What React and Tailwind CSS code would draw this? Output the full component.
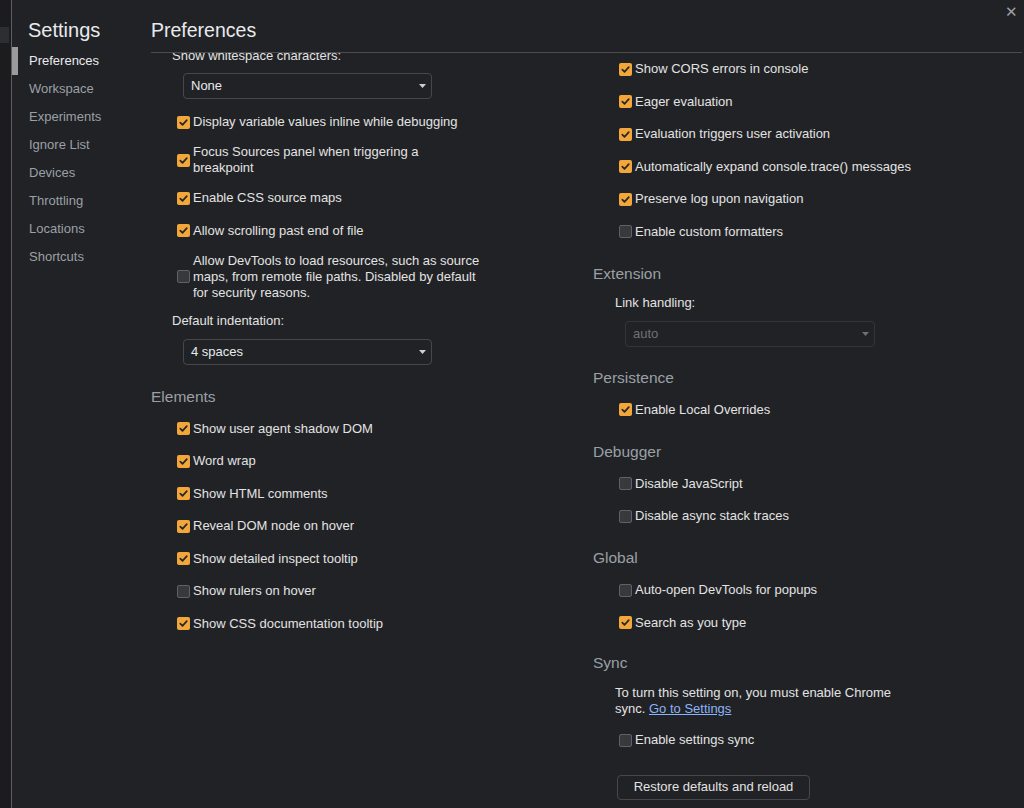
import React from "react";

const Box = ({ checked }) =>
  checked ? (
    <span className="w-[13px] h-[13px] rounded-[2px] bg-[#f3a73b] flex items-center justify-center shrink-0">
      <svg width="11" height="11" viewBox="0 0 11 11">
        <path d="M2.3 5.7 L4.5 7.9 L8.8 3.1" fill="none" stroke="#26272a" strokeWidth="1.7" strokeLinecap="round" strokeLinejoin="round" />
      </svg>
    </span>
  ) : (
    <span className="w-[13px] h-[13px] rounded-[2px] bg-[#38393c] border border-[#5f6166] shrink-0" />
  );

const Row = ({ checked, children, pl = "pl-[26px]" }) => (
  <div className={`flex items-center min-h-[32.5px] py-[5.75px] ${pl}`}>
    <Box checked={checked} />
    <span className="ml-[3px] max-w-[300px] leading-[16px]">{children}</span>
  </div>
);

const Arrow = ({ color }) => (
  <svg width="7" height="4" viewBox="0 0 7 4">
    <path d="M0 0 H7 L3.5 4 Z" fill={color} />
  </svg>
);

const Select = ({ value, disabled, w = "w-[249px]" }) => (
  <div
    className={`ml-[32px] ${w} h-[26px] border rounded-[4px] flex items-center justify-between pl-[7px] pr-[5px] ${
      disabled ? "border-[#34353a] text-[#6f7075]" : "border-[#45474c] text-[#e8eaed]"
    }`}
  >
    <span className="leading-[16px]">{value}</span>
    <Arrow color={disabled ? "#6f7075" : "#d0d0d0"} />
  </div>
);

const Heading = ({ children, mt }) => (
  <div className={`${mt} text-[15.5px] leading-[20px] text-[#9aa0a6]`}>{children}</div>
);

export default function App() {
  const nav = ["Preferences", "Workspace", "Experiments", "Ignore List", "Devices", "Throttling", "Locations", "Shortcuts"];
  return (
    <div className="relative w-[1024px] h-[808px] bg-[#212225] flex overflow-hidden text-[13px] text-[#e3e3e3] font-['Liberation_Sans',Arial,sans-serif]">
      <div className="w-[12px] shrink-0 bg-[#1c1c1e] border-r border-[#5f5f62] pt-[27px]">
        <div className="h-[16px] w-[9px] bg-[#2d2e31]" />
      </div>

      <div className="w-[139px] shrink-0 flex flex-col">
        <div className="pt-[18px] pl-[16px] text-[20px] leading-[24px] text-[#e8eaed]">Settings</div>
        <div className="mt-[5px] flex flex-col">
          {nav.map((n, i) => (
            <div key={n} className="flex items-center h-[28px]">
              <div className={`w-[6px] h-full ${i === 0 ? "bg-[#9b9b9d]" : ""}`} />
              <span className={`ml-[11px] ${i === 0 ? "text-[#e8eaed]" : "text-[#9aa0a6]"}`}>{n}</span>
            </div>
          ))}
        </div>
      </div>

      <div className="flex-1 flex flex-col mr-[2px]">
        <div className="h-[53px] shrink-0 border-b border-[#4a4c50] pt-[18px] text-[19.5px] leading-[24px] text-[#e8eaed]">
          Preferences
        </div>
        <div className="flex-1 overflow-hidden flex">
          <div className="w-[442px] shrink-0 -mt-[5px]">
            <div className="pl-[21px] leading-[16px]">Show whitespace characters:</div>
            <div className="mt-[9px]">
              <Select value="None" />
            </div>
            <div className="mt-[7px]">
              <Row checked>Display variable values inline while debugging</Row>
              <Row checked>
                Focus Sources panel when triggering a<br />
                breakpoint
              </Row>
              <Row checked>Enable CSS source maps</Row>
              <Row checked>Allow scrolling past end of file</Row>
              <Row>
                Allow DevTools to load resources, such as source
                <br />
                maps, from remote file paths. Disabled by default
                <br />
                for security reasons.
              </Row>
            </div>
            <div className="pl-[21px] mt-[6px] leading-[16px]">Default indentation:</div>
            <div className="mt-[10px]">
              <Select value="4 spaces" />
            </div>
            <Heading mt="mt-[22px]">Elements</Heading>
            <div className="mt-[5.75px]">
              <Row checked>Show user agent shadow DOM</Row>
              <Row checked>Word wrap</Row>
              <Row checked>Show HTML comments</Row>
              <Row checked>Reveal DOM node on hover</Row>
              <Row checked>Show detailed inspect tooltip</Row>
              <Row>Show rulers on hover</Row>
              <Row checked>Show CSS documentation tooltip</Row>
            </div>
          </div>

          <div className="flex-1">
            <Row checked>Show CORS errors in console</Row>
            <Row checked>Eager evaluation</Row>
            <Row checked>Evaluation triggers user activation</Row>
            <Row checked>Automatically expand console.trace() messages</Row>
            <Row checked>Preserve log upon navigation</Row>
            <Row>Enable custom formatters</Row>

            <Heading mt="mt-[15.75px]">Extension</Heading>
            <div className="pl-[22px] mt-[11px] leading-[16px]">Link handling:</div>
            <div className="mt-[10px]">
              <Select value="auto" disabled w="w-[250px]" />
            </div>

            <Heading mt="mt-[21px]">Persistence</Heading>
            <div className="mt-[5.75px]">
              <Row checked>Enable Local Overrides</Row>
            </div>

            <Heading mt="mt-[15.75px]">Debugger</Heading>
            <div className="mt-[5.75px]">
              <Row>Disable JavaScript</Row>
              <Row>Disable async stack traces</Row>
            </div>

            <Heading mt="mt-[15.5px]">Global</Heading>
            <div className="mt-[5.75px]">
              <Row>Auto-open DevTools for popups</Row>
              <Row checked>Search as you type</Row>
            </div>

            <Heading mt="mt-[14.5px]">Sync</Heading>
            <div className="pl-[22px] mt-[12px] leading-[16px]">
              To turn this setting on, you must enable Chrome
              <br />
              sync. <span className="text-[#8ab4f8] underline">Go to Settings</span>
            </div>
            <div className="mt-[6.75px]">
              <Row>Enable settings sync</Row>
            </div>
            <div className="ml-[24px] mt-[18px] w-[193px] h-[25px] border border-[#45474c] rounded-[4px] flex items-center justify-center text-[#e3e3e3]">
              Restore defaults and reload
            </div>
          </div>
        </div>
      </div>

      <div className="absolute top-[4px] right-[6px] text-[#9aa0a6] text-[15px] leading-[16px]">✕</div>
    </div>
  );
}
